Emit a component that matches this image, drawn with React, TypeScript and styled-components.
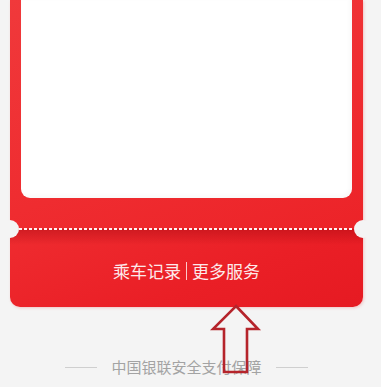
import React from "react";
import styled, { createGlobalStyle } from "styled-components";

const Global = createGlobalStyle`
  html, body { margin: 0; padding: 0; background: #f4f4f4; }
  body { font-family: "Noto Sans CJK SC", "Noto Sans", sans-serif; }
`;

const Page = styled.div`
  position: relative;
  width: 381px;
  height: 387px;
  overflow: hidden;
  background: #f4f4f4;
`;

const Card = styled.div`
  position: relative;
  margin-left: 10px;
  width: 353px;
  border-radius: 0 0 10px 10px;
  box-shadow: 1px 1px 3px rgba(230, 60, 60, 0.25);
`;

const TopPart = styled.div`
  padding: 0 11px;
  height: 229px;
  display: flex;
  flex-direction: column;
  background: linear-gradient(160deg, #f0393b 0%, #ef2c30 60%, #ec2328 100%);
`;

const WhitePanel = styled.div`
  height: 198px;
  background: #ffffff;
  border-radius: 0 0 9px 9px;
  box-shadow: inset -2px -2px 4px rgba(0, 0, 0, 0.03);
`;

const Perforation = styled.div`
  position: relative;
  height: 0;
`;

const Dashes = styled.div`
  position: absolute;
  left: 9px;
  right: 9px;
  top: -1px;
  height: 2px;
  background-image: linear-gradient(to right, #ffffff 0, #ffffff 3px, transparent 3px);
  background-size: 5px 2px;
  background-repeat: repeat-x;
  opacity: 0.95;
`;

const Notch = styled.div<{ $side: "left" | "right" }>`
  position: absolute;
  top: -9px;
  ${(p) => (p.$side === "left" ? "left: -9px;" : "right: -9px;")}
  width: 18px;
  height: 18px;
  border-radius: 50%;
  background: #f4f4f4;
`;

const BottomPart = styled.div`
  height: 78px;
  border-radius: 0 0 10px 10px;
  display: flex;
  align-items: center;
  justify-content: center;
  background:
    linear-gradient(to bottom, rgba(150, 0, 10, 0.35) 0px, rgba(150, 0, 10, 0) 16px),
    linear-gradient(160deg, #ef2c30 0%, #ea1f26 60%, #e61a22 100%);
`;

const Links = styled.div`
  display: flex;
  align-items: center;
  gap: 5px;
  margin-top: 5px;
  color: #fde9ea;
  font-size: 17px;
  letter-spacing: 0;
`;

const LinkText = styled.span`
  line-height: 20px;
`;

const Divider = styled.span`
  width: 1px;
  height: 18px;
  background: rgba(255, 230, 230, 0.85);
`;

const Footer = styled.div`
  display: flex;
  align-items: center;
  justify-content: center;
  margin-top: 50px;
  gap: 14px;
  padding-right: 8px;
`;

const Rule = styled.span`
  width: 32px;
  height: 1px;
  background: #cfcfcf;
`;

const FooterText = styled.span`
  color: #a3a3a3;
  font-size: 15px;
  line-height: 20px;
`;

const ArrowWrap = styled.svg`
  position: absolute;
  left: 210px;
  top: 303px;
`;

export default function App() {
  return (
    <>
      <Global />
      <Page>
        <Card>
          <TopPart>
            <WhitePanel />
          </TopPart>
          <Perforation>
            <Dashes />
            <Notch $side="left" />
            <Notch $side="right" />
          </Perforation>
          <BottomPart>
            <Links>
              <LinkText>乘车记录</LinkText>
              <Divider />
              <LinkText>更多服务</LinkText>
            </Links>
          </BottomPart>
        </Card>
        <Footer>
          <Rule />
          <FooterText>中国银联安全支付保障</FooterText>
          <Rule />
        </Footer>
        <ArrowWrap width="52" height="74" viewBox="0 0 52 74">
          <polygon
            points="26,3 48,26 37,26 37,69 14,69 14,26 3,26"
            fill="none"
            stroke="#b5242b"
            strokeWidth="2.6"
            strokeLinejoin="miter"
          />
        </ArrowWrap>
      </Page>
    </>
  );
}
